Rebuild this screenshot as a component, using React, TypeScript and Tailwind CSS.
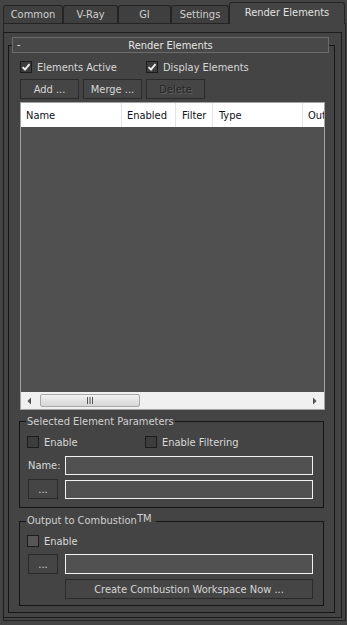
import React from "react";

const F = "font-['DejaVu_Sans_Condensed','Liberation_Sans',sans-serif]";

function CheckBox({ checked, light }: { checked?: boolean; light?: boolean }) {
  return (
    <span
      className={`flex h-[12px] w-[12px] shrink-0 items-center justify-center border border-[#1c1c1c] ${
        light ? "bg-[#575757]" : "bg-[#3d3d3d]"
      }`}
    >
      {checked && (
        <svg width="10" height="10" viewBox="0 0 10 10">
          <path d="M1.6 5.1 L4 7.5 L8.5 2.2" stroke="#ededed" strokeWidth="1.9" fill="none" />
        </svg>
      )}
    </span>
  );
}

function Btn({
  children,
  className = "",
  disabled,
}: {
  children: React.ReactNode;
  className?: string;
  disabled?: boolean;
}) {
  return (
    <div
      className={`flex h-[20px] items-center justify-center border border-[#2a2a2a] bg-[#454545] ${
        disabled ? "text-[#262626] [text-shadow:1px_1px_0_#626262]" : "text-[#d6d6d6]"
      } ${className}`}
    >
      {children}
    </div>
  );
}

function Input({ className = "" }: { className?: string }) {
  return <div className={`h-[19px] w-[248px] border border-[#f2f2f2] bg-[#515151] ${className}`} />;
}

function Tab({ label, w, active }: { label: string; w: string; active?: boolean }) {
  if (active) {
    return (
      <div
        className={`relative z-10 -mb-[1px] flex h-[22px] ${w} items-start justify-center rounded-t-[3px] border border-b-0 border-[#242424] bg-[#444444] pt-[3px] text-[#e2e2e2]`}
      >
        {label}
      </div>
    );
  }
  return (
    <div
      className={`flex h-[18px] ${w} items-center justify-center rounded-t-[3px] border border-b-0 border-[#242424] bg-[#3f3f3f] text-[#cfcfcf]`}
    >
      {label}
    </div>
  );
}

export default function App() {
  return (
    <div className={`h-[625px] w-[347px] overflow-hidden bg-[#444444] text-[11px] leading-[13px] ${F}`}>
      {/* tab strip */}
      <div className="flex h-[23px] items-end pl-[3px]">
        <Tab label="Common" w="w-[60px]" />
        <Tab label="V-Ray" w="w-[55px]" />
        <Tab label="GI" w="w-[53px]" />
        <Tab label="Settings" w="w-[58px]" />
        <Tab label="Render Elements" w="w-[116px]" active />
      </div>

      {/* frame A */}
      <div className="ml-[3px] h-[598px] w-[343px] border border-[#242424] pt-[8px]">
        {/* frame B */}
        <div className="h-[586px] w-[339px] -ml-[1px] border border-[#1c1c1c] pt-[12px] pl-[4px]">
          {/* frame C (rollout) */}
          <div className="flex h-[568px] w-[327px] flex-col border border-[#161616] text-[#d8d8d8]">
            {/* rollout header */}
            <div className="relative -mt-[9px] ml-[3px] flex h-[16px] w-[317px] items-center border border-[#6c6c6c] bg-[#484848] text-[#e6e6e6]">
              <span className="absolute left-[4px] top-[0px]">-</span>
              <span className="w-full text-center">Render Elements</span>
            </div>

            {/* checkboxes */}
            <div className="mt-[8px] flex h-[12px] items-center pl-[11px]">
              <div className="flex w-[126px] items-center gap-[5px]">
                <CheckBox checked />
                <span>Elements Active</span>
              </div>
              <div className="flex items-center gap-[5px]">
                <CheckBox checked />
                <span>Display Elements</span>
              </div>
            </div>

            {/* buttons */}
            <div className="mt-[6px] flex gap-[4px] pl-[11px]">
              <Btn className="w-[59px]">Add ...</Btn>
              <Btn className="w-[59px]">Merge ...</Btn>
              <Btn className="w-[59px]" disabled>
                Delete
              </Btn>
            </div>

            {/* list view */}
            <div className="ml-[11px] mt-[3px] flex h-[308px] w-[305px] flex-col border border-[#a3a3a3] bg-[#505050]">
              <div className="flex h-[24px] shrink-0 items-center overflow-hidden bg-white text-[#101020]">
                <div className="flex h-full w-[101px] shrink-0 items-center border-r border-[#e3e3e3] pl-[5px]">Name</div>
                <div className="flex h-full w-[54px] shrink-0 items-center border-r border-[#e3e3e3] pl-[5px]">Enabled</div>
                <div className="flex h-full w-[37px] shrink-0 items-center border-r border-[#e3e3e3] pl-[6px]">Filter</div>
                <div className="flex h-full w-[90px] shrink-0 items-center border-r border-[#e3e3e3] pl-[6px]">Type</div>
                <div className="flex h-full items-center whitespace-nowrap pl-[5px]">Output</div>
              </div>
              <div className="flex-1" />
              <div className="relative flex h-[17px] shrink-0 items-center bg-[#f0f0f0]">
                <svg className="ml-[6px]" width="5" height="8" viewBox="0 0 5 8">
                  <path d="M4 0.5 L0.5 4 L4 7.5 Z" fill="#505050" />
                </svg>
                <div className="ml-[8px] flex h-[13px] w-[100px] items-center justify-center rounded-[2px] border border-[#a9a9a9] bg-gradient-to-b from-[#f2f2f2] to-[#d6d6d6]">
                  <svg width="8" height="7" viewBox="0 0 8 7">
                    <path d="M1.5 0 V7 M4 0 V7 M6.5 0 V7" stroke="#555" strokeWidth="1" />
                  </svg>
                </div>
                <div className="flex-1" />
                <svg className="mr-[7px]" width="5" height="8" viewBox="0 0 5 8">
                  <path d="M1 0.5 L4.5 4 L1 7.5 Z" fill="#505050" />
                </svg>
              </div>
            </div>

            {/* Selected Element Parameters */}
            <div className="relative ml-[10px] mt-[11px] flex h-[87px] w-[305px] flex-col border border-[#141414]">
              <span className="absolute -top-[7px] left-[6px] bg-[#444444] px-[1px] text-[#d0d0d0]">
                Selected Element Parameters
              </span>
              <div className="mt-[14px] flex h-[12px] items-center pl-[7px]">
                <div className="flex w-[118px] items-center gap-[5px]">
                  <CheckBox />
                  <span>Enable</span>
                </div>
                <div className="flex items-center gap-[5px]">
                  <CheckBox />
                  <span>Enable Filtering</span>
                </div>
              </div>
              <div className="mt-[8px] flex items-center pl-[8px]">
                <span className="w-[37px]">Name:</span>
                <Input />
              </div>
              <div className="mt-[4px] flex items-center pl-[8px]">
                <Btn className="w-[30px]">...</Btn>
                <Input className="ml-[7px]" />
              </div>
            </div>

            {/* Output to Combustion */}
            <div className="relative ml-[10px] mt-[13px] flex h-[85px] w-[305px] flex-col border border-[#141414]">
              <span className="absolute -top-[8px] left-[6px] flex items-start bg-[#444444] px-[1px] text-[#d0d0d0]">
                Output to&nbsp;Combustion<span className="-mt-[2px] text-[11px]">TM</span>
                <span className="w-[4px]" />
              </span>
              <div className="mt-[13px] flex h-[12px] items-center pl-[7px]">
                <div className="flex items-center gap-[5px]">
                  <CheckBox light />
                  <span>Enable</span>
                </div>
              </div>
              <div className="mt-[7px] flex items-center pl-[8px]">
                <Btn className="w-[30px]">...</Btn>
                <Input className="ml-[7px] h-[20px]" />
              </div>
              <div className="mt-[5px] flex pl-[45px]">
                <Btn className="w-[248px]">Create Combustion Workspace Now ...</Btn>
              </div>
            </div>
          </div>
        </div>
      </div>
    </div>
  );
}
